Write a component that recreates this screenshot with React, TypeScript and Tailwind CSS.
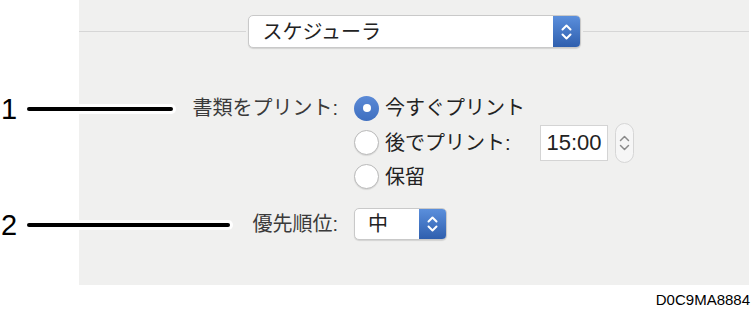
import React from "react";

const JP = { fontFamily: '"Liberation Sans", "Noto Sans CJK JP", sans-serif' };

function Chevrons({ color = "white", w = 11, h = 18, sw = 2 }: { color?: string; w?: number; h?: number; sw?: number }) {
  return (
    <svg width={w} height={h} viewBox="0 0 11 18" fill="none" stroke={color} strokeWidth={sw} strokeLinecap="round" strokeLinejoin="round">
      <path d="M1.5 6.5 L5.5 2.5 L9.5 6.5" />
      <path d="M1.5 11.5 L5.5 15.5 L9.5 11.5" />
    </svg>
  );
}

function Popup({ label, width, height, pl }: { label: string; width: string; height: string; pl: string }) {
  return (
    <div className={`flex ${width} ${height} rounded-[5px] border border-[#c9c9c9] bg-white shadow-[0_1px_1px_rgba(0,0,0,0.12)] overflow-hidden`}>
      <div className={`flex-1 flex items-center ${pl} text-[20px] text-[#222]`}>{label}</div>
      <div className="w-[27px] flex items-center justify-center bg-linear-to-b from-[#5b8fdc] to-[#2f5fae]">
        <Chevrons />
      </div>
    </div>
  );
}

function Radio({ checked }: { checked?: boolean }) {
  if (checked) {
    return (
      <div className="w-[25px] h-[25px] rounded-full bg-linear-to-b from-[#5b8ad6] to-[#3f6fc0] flex items-center justify-center shrink-0">
        <div className="w-[8px] h-[8px] rounded-full bg-white" />
      </div>
    );
  }
  return <div className="w-[25px] h-[25px] rounded-full bg-white border border-[#b9b9b9] shadow-[0_1px_1px_rgba(0,0,0,0.1)] shrink-0" />;
}

function Callout({ n, lineW, top }: { n: string; lineW: string; top: string }) {
  return (
    <div className={`absolute left-0 ${top} flex items-center h-[30px]`}>
      <span className="w-[27px] pl-[1px] text-[29px] leading-none text-black" style={{ fontFamily: '"Liberation Sans", sans-serif' }}>
        {n}
      </span>
      <div className={`${lineW} h-[3.5px] rounded-full bg-black ring-[3px] ring-white`} />
    </div>
  );
}

export default function App() {
  return (
    <div className="relative w-[753px] h-[310px] bg-white" style={JP}>
      <div className="ml-[79px] w-[670px] h-[285px] bg-[#f0f0ef] flex flex-col">
        <div className="mt-[15px] flex items-center h-[33px]">
          <div className="flex-1 h-px bg-[#d6d6d6]" />
          <div className="mx-[2px]">
            <Popup label="スケジューラ" width="w-[333px]" height="h-[33px]" pl="pl-[14px]" />
          </div>
          <div className="flex-1 h-px bg-[#d6d6d6]" />
        </div>

        <div className="mt-[43px] grid grid-cols-[259px_1fr] gap-x-[16px]">
          <div className="h-[34px] flex items-center justify-end text-[20px] text-[#3a3a3a]">書類をプリント:</div>
          <div className="h-[34px] flex items-center gap-[6px] text-[20px] text-[#222]">
            <Radio checked />
            <span>今すぐプリント</span>
          </div>

          <div />
          <div className="h-[35px] flex items-center text-[20px] text-[#222]">
            <Radio />
            <span className="ml-[6px] w-[155px]">後でプリント:</span>
            <div className="w-[68px] h-[36px] bg-white border border-[#d4d4d4] flex items-center justify-center text-[22px] text-[#222]">
              15:00
            </div>
            <div className="ml-[7px] w-[19px] h-[40px] rounded-full border border-[#d6d6d6] bg-[#f6f6f6] flex items-center justify-center">
              <Chevrons color="#8a8a8a" w={11} h={28} sw={1.5} />
            </div>
          </div>

          <div />
          <div className="h-[33px] flex items-center gap-[6px] text-[20px] text-[#222]">
            <Radio />
            <span>保留</span>
          </div>

          <div className="mt-[15px] h-[32px] flex items-center justify-end text-[20px] text-[#3a3a3a]">優先順位:</div>
          <div className="mt-[15px] h-[32px] flex items-center">
            <Popup label="中" width="w-[93px]" height="h-[32px]" pl="pl-[13px]" />
          </div>
        </div>
      </div>

      <div className="flex justify-end pr-[3px] pt-[7px]">
        <span className="text-[15px] leading-none text-black" style={{ fontFamily: '"Liberation Sans", sans-serif' }}>
          D0C9MA8884
        </span>
      </div>

      <Callout n="1" lineW="w-[146px]" top="top-[94px]" />
      <Callout n="2" lineW="w-[203px]" top="top-[210px]" />
    </div>
  );
}
